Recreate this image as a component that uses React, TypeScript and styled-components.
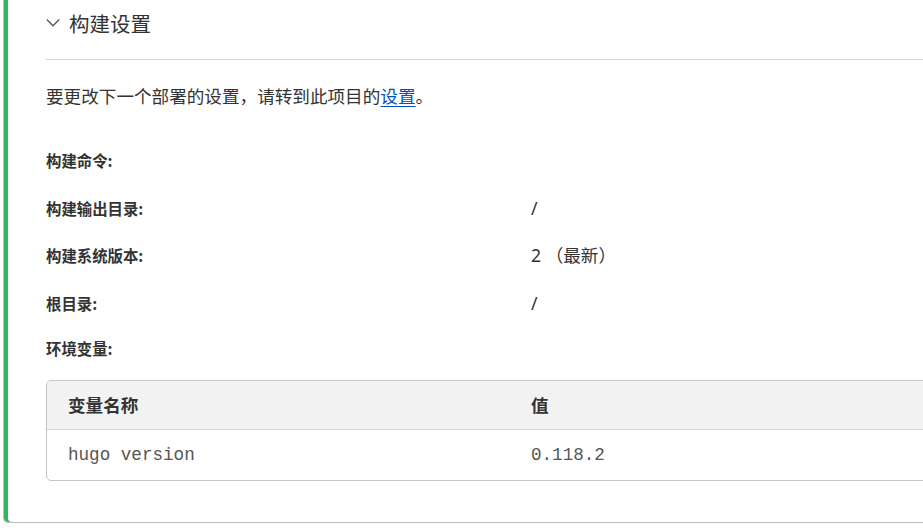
import React from "react";
import styled, { createGlobalStyle } from "styled-components";

const Global = createGlobalStyle`
  html, body { margin: 0; padding: 0; background: #fff; overflow: hidden; }
  body { font-family: "Noto Sans", "Noto Sans CJK SC", sans-serif; color: #333; }
`;

const Card = styled.section`
  box-sizing: border-box;
  width: 1000px;
  margin-left: 3px;
  border: 1px solid #bdbdbd;
  border-top: none;
  border-radius: 0 0 5px 5px;
  box-shadow: inset 4px 0 0 #31b862;
  padding: 0 40px 41px 42px;
`;

const Header = styled.div`
  height: 46px;
  display: flex;
  align-items: center;
  gap: 9px;
`;

const Title = styled.h2`
  margin: 0;
  font-family: "Noto Sans CJK SC", sans-serif;
  font-weight: 400;
  font-size: 20.5px;
  line-height: 28px;
  color: #333;
`;

const Divider = styled.hr`
  margin: 13px 0 0;
  border: none;
  border-top: 1px solid #d6d6d6;
`;

const Intro = styled.p`
  margin: 24px 0 0;
  font-family: "Noto Sans CJK SC", sans-serif;
  font-size: 17.6px;
  line-height: 24px;
  color: #333;
`;

const Link = styled.a`
  color: #0051c3;
  text-decoration: underline;
  text-underline-offset: 3px;
`;

const Rows = styled.div`
  margin-top: 40px;
  display: grid;
  grid-template-columns: 485px 1fr;
  row-gap: 23.5px;
`;

const Label = styled.div`
  font-family: "Noto Sans CJK SC", sans-serif;
  font-weight: 700;
  font-size: 15.4px;
  line-height: 24px;
  color: #333;
`;

const Value = styled.div`
  font-family: "Noto Sans", "Noto Sans CJK SC", sans-serif;
  font-size: 17.6px;
  line-height: 24px;
  color: #333;
`;

const EnvLabel = styled(Label)`
  margin-top: 21px;
`;

const TableBox = styled.div`
  margin-top: 20px;
  border: 1px solid #c4c4c4;
  border-radius: 5px;
  overflow: hidden;
`;

const Table = styled.table`
  width: 100%;
  border-collapse: collapse;
`;

const Th = styled.th<{ $w?: number }>`
  width: ${(p) => (p.$w ? `${p.$w}px` : "auto")};
  box-sizing: border-box;
  height: 49px;
  padding: 0 21px;
  text-align: left;
  background: #f2f2f2;
  border-bottom: 1px solid #d6d6d6;
  font-family: "Noto Sans CJK SC", sans-serif;
  font-weight: 700;
  font-size: 17.6px;
  color: #333;
`;

const Td = styled.td`
  height: 50px;
  padding: 0 21px;
  font-family: "Liberation Mono", monospace;
  font-size: 17.6px;
  color: #555;
`;

const Chevron = () => (
  <svg width="14" height="10" viewBox="0 0 14 10" fill="none">
    <polyline points="0.8,1.5 7,7.8 13.2,1.5" stroke="#555" strokeWidth="1.3" />
  </svg>
);

const rows: [string, string][] = [
  ["构建命令:", ""],
  ["构建输出目录:", "/"],
  ["构建系统版本:", "2 （最新）"],
  ["根目录:", "/"],
];

export default function App() {
  return (
    <>
      <Global />
      <Card>
        <Header>
          <Chevron />
          <Title>构建设置</Title>
        </Header>
        <Divider />
        <Intro>
          要更改下一个部署的设置，请转到此项目的<Link href="#">设置</Link>。
        </Intro>
        <Rows>
          {rows.map(([l, v]) => (
            <React.Fragment key={l}>
              <Label>{l}</Label>
              <Value>{v}</Value>
            </React.Fragment>
          ))}
        </Rows>
        <EnvLabel>环境变量:</EnvLabel>
        <TableBox>
          <Table>
            <thead>
              <tr>
                <Th $w={463}>变量名称</Th>
                <Th>值</Th>
              </tr>
            </thead>
            <tbody>
              <tr>
                <Td>hugo version</Td>
                <Td>0.118.2</Td>
              </tr>
            </tbody>
          </Table>
        </TableBox>
      </Card>
    </>
  );
}
